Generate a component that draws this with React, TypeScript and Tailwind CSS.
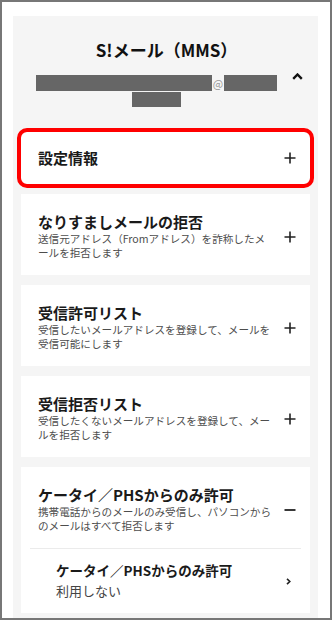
import React from 'react';

const font = { fontFamily: '"Noto Sans CJK JP", "Noto Sans", sans-serif' };

const PlusIcon = () => (
  <svg width="12" height="12" viewBox="0 0 12 12" className="shrink-0">
    <path d="M6 0.5v11M0.5 6h11" stroke="#222" strokeWidth="1.6" fill="none" />
  </svg>
);

const MinusIcon = () => (
  <svg width="12" height="12" viewBox="0 0 12 12" className="shrink-0">
    <path d="M0.5 6h11" stroke="#222" strokeWidth="1.8" fill="none" />
  </svg>
);

interface SettingCardProps {
  title: string;
  lines?: string[];
  open?: boolean;
}

const SettingCard: React.FC<SettingCardProps> = ({ title, lines, open }) => (
  <div className="flex items-center pl-[17px] pr-[14px] pt-[19px] pb-[15px]">
    <div className="flex-1">
      <div className="text-[15px] leading-[18px] font-bold text-[#1a1a1a]">{title}</div>
      {lines && (
        <div className="mt-[1px] text-[10.6px] leading-[14px] text-[#4d4d4d] whitespace-nowrap">
          {lines.map((l) => (
            <div key={l}>{l}</div>
          ))}
        </div>
      )}
    </div>
    {open ? <MinusIcon /> : <PlusIcon />}
  </div>
);

export default function App() {
  return (
    <div
      style={font}
      className="w-[332px] h-[620px] border-2 border-[#777] bg-white overflow-hidden pl-[11px] pr-[12px] pt-[14px]"
    >
      <div className="bg-[#f5f5f5] px-2 pb-4 min-h-full">
        {/* header */}
        <div className="pt-[22px] pb-[21px]">
          <div className="text-center text-[17px] leading-[24px] font-bold text-[#111] pl-[2px]">
            S!メール（MMS）
          </div>
          <div className="flex items-start mt-[11px]">
            <div className="flex-1 flex flex-col items-center">
              <div className="flex items-center h-[19px]">
                <span className="block w-[176px] h-[16px] bg-[#666]" />
                <span className="text-[11px] leading-[16px] text-[#999] w-[12px] text-center">@</span>
                <span className="block w-[53px] h-[16px] bg-[#666]" />
              </div>
              <div className="flex items-start h-[19px]">
                <span className="block w-[49px] h-[15px] bg-[#666]" />
              </div>
            </div>
            <div className="w-[18px]">
              <svg width="11" height="7" viewBox="0 0 11 7">
                <path d="M1.2 5.8L5.5 1.5L9.8 5.8" stroke="#111" strokeWidth="2.4" fill="none" />
              </svg>
            </div>
          </div>
        </div>

        <div className="flex flex-col gap-[10px]">
          <div className="bg-white h-[52px] rounded-md outline-4 outline-solid outline-[#ff0000] flex items-center pl-[17px] pr-[14px]">
            <div className="flex-1 text-[15px] font-bold text-[#1a1a1a]">設定情報</div>
            <PlusIcon />
          </div>

          <div className="bg-white">
            <SettingCard
              title="なりすましメールの拒否"
              lines={['送信元アドレス（Fromアドレス）を詐称したメ', 'ールを拒否します']}
            />
          </div>

          <div className="bg-white">
            <SettingCard
              title="受信許可リスト"
              lines={['受信したいメールアドレスを登録して、メールを', '受信可能にします']}
            />
          </div>

          <div className="bg-white">
            <SettingCard
              title="受信拒否リスト"
              lines={['受信したくないメールアドレスを登録して、メー', 'ルを拒否します']}
            />
          </div>

          <div className="bg-white">
            <SettingCard
              title="ケータイ／PHSからのみ許可"
              lines={['携帯電話からのメールのみ受信し、パソコンから', 'のメールはすべて拒否します']}
              open
            />
            <div className="mx-[9px] border-t border-[#ebebeb]" />
            <div className="flex items-center pl-[35px] pr-[19px] pt-[12px] pb-[12px]">
              <div className="flex-1">
                <div className="text-[13.5px] leading-[19px] font-bold text-[#1a1a1a]">
                  ケータイ／PHSからのみ許可
                </div>
                <div className="mt-[1px] text-[13px] leading-[20px] text-[#444]">利用しない</div>
              </div>
              <svg width="5" height="7" viewBox="0 0 5 7">
                <path d="M1 0.8L3.8 3.5L1 6.2" stroke="#222" strokeWidth="1.6" fill="none" />
              </svg>
            </div>
          </div>
        </div>
      </div>
    </div>
  );
}
